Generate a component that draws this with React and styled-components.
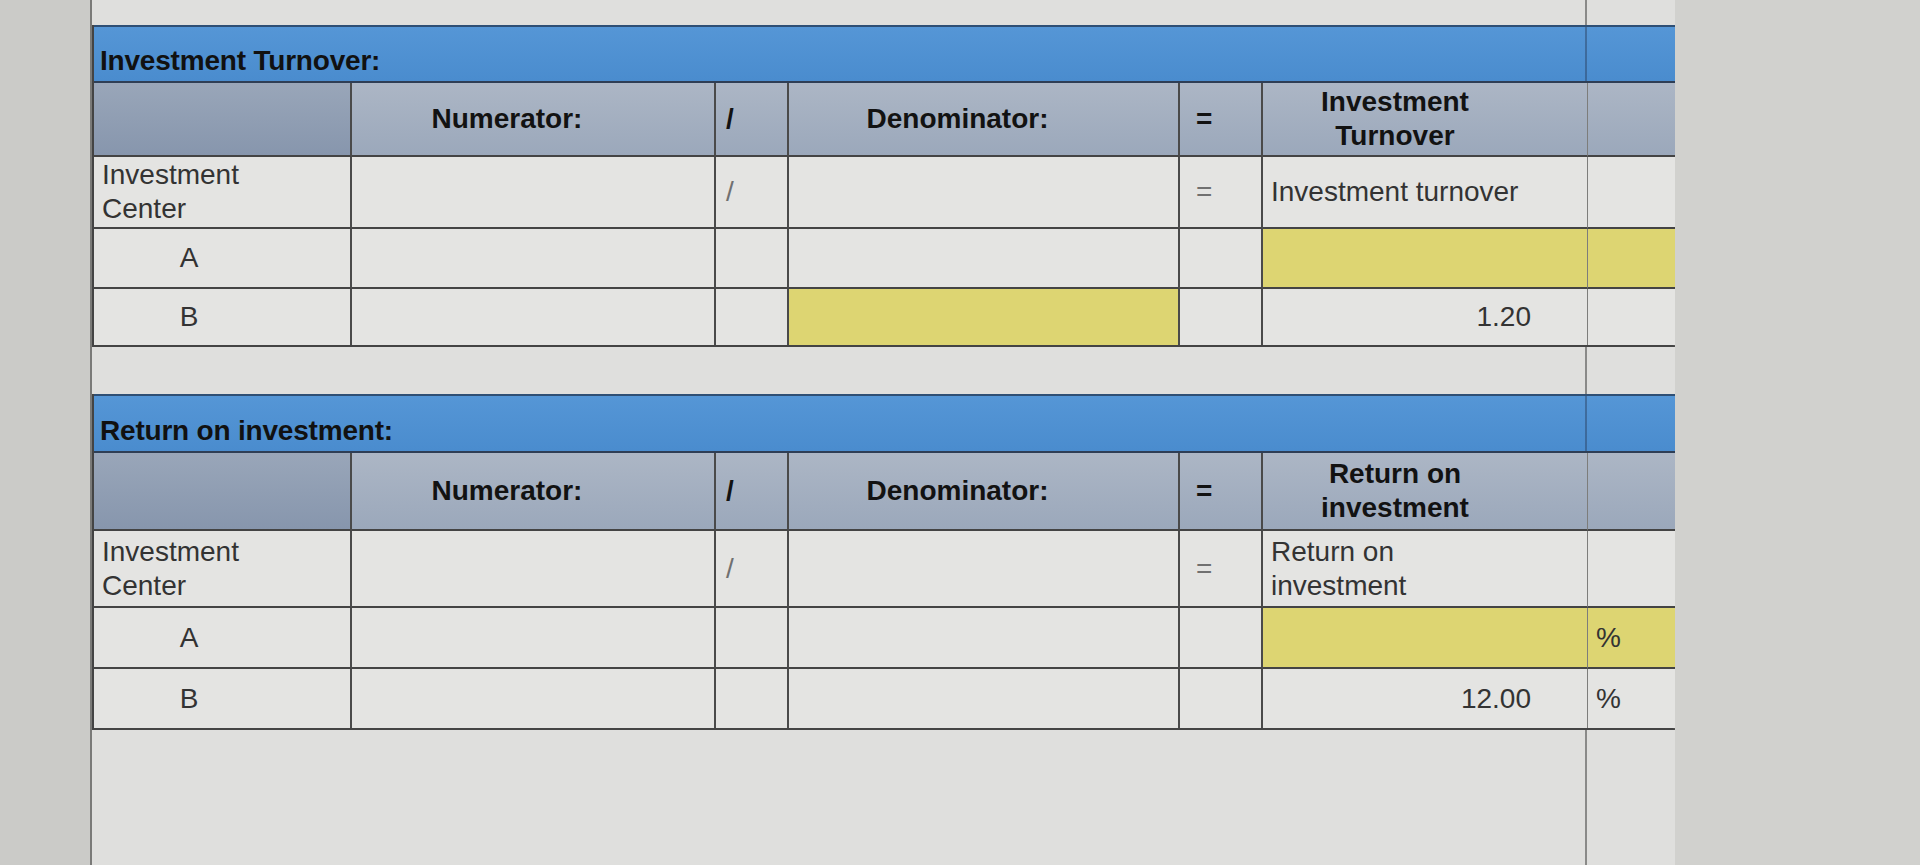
import React from "react";
import styled, { createGlobalStyle } from "styled-components";

const GlobalStyle = createGlobalStyle`
  html, body {
    margin: 0;
    padding: 0;
    background: #cfcfcc;
    font-family: "Liberation Sans", Arial, sans-serif;
  }
`;

const Page = styled.div`
  display: flex;
  width: 1920px;
  height: 865px;
  overflow: hidden;
`;

const Gutter = styled.div`
  width: 90px;
  background: #cbcbc8;
  border-right: 2px solid #7a7a78;
`;

const Sheet = styled.div`
  width: 1583px;
  padding-top: 25px;
  display: flex;
  flex-direction: column;
  gap: 47px;
  background:
    linear-gradient(
      to right,
      transparent 1493px,
      #8a8a88 1493px,
      #8a8a88 1495px,
      transparent 1495px
    ),
    #dfdfdd;
`;

const Side = styled.div`
  flex: 1;
  background: #d1d1ce;
`;

const Grid = styled.div`
  display: grid;
  grid-template-columns: 258px 364px 73px 391px 83px 325px 89px;
  grid-template-rows: ${(p) => p.$rows};
  border-left: 2px solid #444;
  border-right: 2px solid #555;
  border-bottom: 2px solid #444;
`;

const Title = styled.div`
  grid-column: 1 / -1;
  display: flex;
  align-items: flex-end;
  padding: 0 0 4px 6px;
  background:
    linear-gradient(
      to right,
      transparent 1491px,
      rgba(40, 60, 90, 0.45) 1491px,
      rgba(40, 60, 90, 0.45) 1493px,
      transparent 1493px
    ),
    linear-gradient(180deg, #5596d6 0%, #4a8cce 100%);
  border-top: 2px solid #2f4f74;
  border-bottom: 2px solid #2e3e55;
  font-size: 28px;
  font-weight: 700;
  color: #111;
  letter-spacing: -0.2px;
`;

const Cell = styled.div`
  display: flex;
  align-items: center;
  justify-content: ${(p) =>
    p.$align === "center" ? "center" : p.$align === "right" ? "flex-end" : "flex-start"};
  text-align: ${(p) => p.$align || "left"};
  padding: ${(p) => p.$pad || "0 8px"};
  box-sizing: border-box;
  font-size: 28px;
  line-height: 1.2;
  font-weight: ${(p) => (p.$head ? 700 : 400)};
  color: ${(p) => (p.$head ? "#121212" : p.$faint ? "#707070" : "#333")};
  background: ${(p) =>
    p.$fill
      ? "#ddd572"
      : p.$head
      ? p.$dark
        ? "linear-gradient(180deg, #99a6b9 0%, #8796ad 100%)"
        : "linear-gradient(180deg, #acb6c5 0%, #9ba8bb 100%)"
      : "#e4e4e2"};
  border-right: ${(p) => (p.$last ? "none" : p.$soft ? "1px solid #7d7d7b" : "2px solid #4a4a4a")};
  border-bottom: ${(p) => (p.$noBottom ? "none" : "2px solid #444")};
`;

const label = (a, b) => (
  <>
    {a}
    <br />
    {b}
  </>
);

const buildRows = ({ headLabel, resultLabel, aPct, bValue, bPct, bDenomFill }) => [
  [
    { head: true, dark: true },
    { head: true, text: "Numerator:", align: "center", pad: "0 52px 0 0" },
    { head: true, text: "/", pad: "0 10px" },
    { head: true, text: "Denominator:", align: "center", pad: "0 52px 0 0" },
    { head: true, text: "=", pad: "0 16px" },
    { head: true, text: headLabel, align: "center", pad: "0 60px 0 0", soft: true },
    { head: true, last: true },
  ],
  [
    { text: label("Investment", "Center") },
    {},
    { text: "/", faint: true, pad: "0 10px" },
    {},
    { text: "=", faint: true, pad: "0 16px" },
    { text: resultLabel, soft: true },
    { last: true },
  ],
  [
    { text: "A", align: "center", pad: "0 66px 0 0" },
    {},
    {},
    {},
    {},
    { fill: true, soft: true },
    { fill: true, last: true, text: aPct },
  ],
  [
    { text: "B", align: "center", pad: "0 66px 0 0", noBottom: true },
    { noBottom: true },
    { noBottom: true },
    { fill: bDenomFill, noBottom: true },
    { noBottom: true },
    { text: bValue, align: "right", pad: "0 56px 0 8px", soft: true, noBottom: true },
    { last: true, text: bPct, noBottom: true },
  ],
];

const tables = [
  {
    title: "Investment Turnover:",
    rows: "58px 74px 72px 60px 56px",
    cells: buildRows({
      headLabel: label("Investment", "Turnover"),
      resultLabel: "Investment turnover",
      aPct: "",
      bValue: "1.20",
      bPct: "",
      bDenomFill: true,
    }),
  },
  {
    title: "Return on investment:",
    rows: "59px 78px 77px 61px 59px",
    cells: buildRows({
      headLabel: label("Return on", "investment"),
      resultLabel: label("Return on", "investment"),
      aPct: "%",
      bValue: "12.00",
      bPct: "%",
      bDenomFill: false,
    }),
  },
];

const RatioTable = ({ title, rows, cells }) => (
  <Grid $rows={rows}>
    <Title>{title}</Title>
    {cells.map((row, r) =>
      row.map((c, i) => (
        <Cell
          key={`${r}-${i}`}
          $head={c.head}
          $dark={c.dark}
          $fill={c.fill}
          $faint={c.faint}
          $align={c.align}
          $pad={c.pad}
          $soft={c.soft}
          $last={c.last}
          $noBottom={c.noBottom}
        >
          {c.text}
        </Cell>
      ))
    )}
  </Grid>
);

export default function App() {
  return (
    <>
      <GlobalStyle />
      <Page>
        <Gutter />
        <Sheet>
          {tables.map((t) => (
            <RatioTable key={t.title} {...t} />
          ))}
        </Sheet>
        <Side />
      </Page>
    </>
  );
}
